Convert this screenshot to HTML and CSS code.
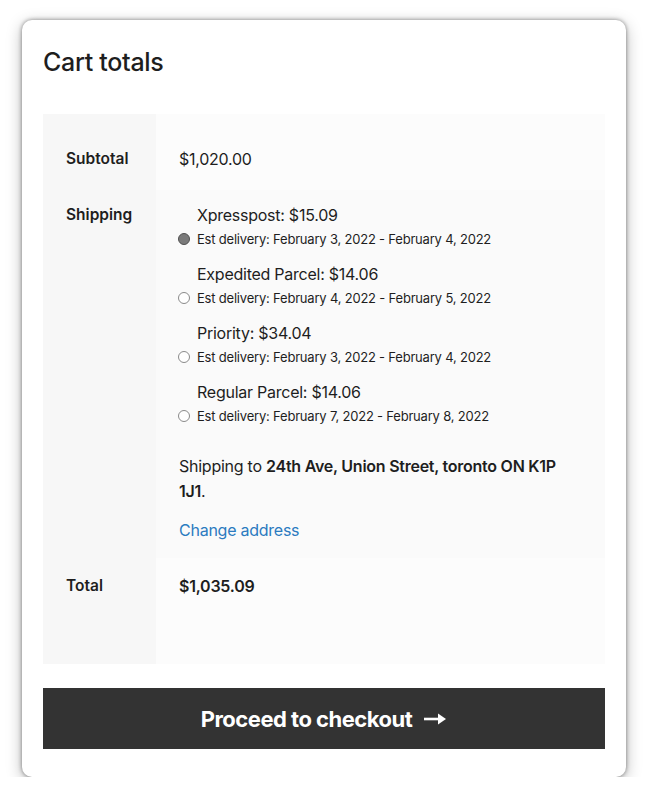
FILE: index.html
```html
<!DOCTYPE html>
<html lang="en">
<head>
    <meta charset="UTF-8">
    <meta name="viewport" content="width=device-width, initial-scale=1.0">
    <title>Cart totals</title>
    <link rel="stylesheet" href="styles.css">
</head>
<body>
    <div class="cart-totals">
        <h2>Cart totals</h2>
        <table class="totals-table">
            <tr class="row-subtotal">
                <th>Subtotal</th>
                <td>$1,020.00</td>
            </tr>
            <tr class="row-shipping">
                <th>Shipping</th>
                <td>
                    <ul class="methods">
                        <li class="method">
                            <label class="method-name" for="m1">Xpresspost: $15.09</label>
                            <input type="radio" name="ship" id="m1" class="radio" checked>
                            <span class="est">Est delivery: February 3, 2022 - February 4, 2022</span>
                        </li>
                        <li class="method">
                            <label class="method-name" for="m2">Expedited Parcel: $14.06</label>
                            <input type="radio" name="ship" id="m2" class="radio">
                            <span class="est">Est delivery: February 4, 2022 - February 5, 2022</span>
                        </li>
                        <li class="method">
                            <label class="method-name" for="m3">Priority: $34.04</label>
                            <input type="radio" name="ship" id="m3" class="radio">
                            <span class="est">Est delivery: February 3, 2022 - February 4, 2022</span>
                        </li>
                        <li class="method">
                            <label class="method-name" for="m4">Regular Parcel: $14.06</label>
                            <input type="radio" name="ship" id="m4" class="radio">
                            <span class="est">Est delivery: February 7, 2022 - February 8, 2022</span>
                        </li>
                    </ul>
                    <p class="destination">Shipping to <strong>24th Ave, Union Street, toronto ON K1P 1J1</strong>.</p>
                    <a href="#" class="change-address">Change address</a>
                </td>
            </tr>
            <tr class="row-total">
                <th>Total</th>
                <td><strong>$1,035.09</strong></td>
            </tr>
        </table>
        <a href="#" class="checkout-button">Proceed to checkout
            <svg class="arrow" width="24" height="14" viewBox="0 0 24 14"><path d="M1 7h17" stroke="#fff" stroke-width="2.6"/><path d="M15 1.5l8 5.5-8 5.5z" fill="#fff"/></svg>
        </a>
    </div>
</body>
</html>
```

FILE: styles.css
```css
body {
    margin: 0;
    background-color: #fff;
    font-family: Inter, "Noto Sans", sans-serif;
    color: #1e1e1e;
}
.cart-totals {
    margin: 20px 0 0 22px;
    width: 562px;
    padding: 27px 21px 28px;
    background-color: #fff;
    border-radius: 10px;
    box-shadow: 0 0 4px rgba(0, 0, 0, 0.45), 0 4px 16px rgba(0, 0, 0, 0.28);
}
h2 {
    margin: 0 0 37px;
    font-size: 25px;
    line-height: 30px;
    font-weight: 500;
    letter-spacing: -0.3px;
}
.totals-table {
    width: 100%;
    border-collapse: collapse;
    font-size: 16px;
    line-height: 24px;
    letter-spacing: -0.25px;
}
.totals-table th {
    width: 89px;
    padding-left: 23px;
    text-align: left;
    vertical-align: top;
    font-size: 15.5px;
    font-weight: 600;
    letter-spacing: 0;
    background-color: #f7f7f7;
}
.totals-table td {
    padding-left: 23px;
    padding-right: 30px;
    vertical-align: top;
    background-color: #fcfcfc;
}
.row-subtotal th,
.row-subtotal td {
    height: 42px;
    padding-top: 33px;
}
.row-shipping th,
.row-shipping td {
    padding-top: 13px;
    padding-bottom: 15px;
}
.row-shipping td {
    background-color: #fafafa;
}
.row-total th,
.row-total td {
    height: 89px;
    padding-top: 16px;
}
.row-total strong {
    font-weight: 600;
}
.methods {
    margin: 0;
    padding: 0;
    list-style: none;
}
.method {
    display: grid;
    grid-template-columns: 12px 1fr;
    column-gap: 6px;
    margin-bottom: 11px;
}
.method-name {
    grid-column: 2;
    line-height: 24px;
}
.radio {
    appearance: none;
    grid-column: 1;
    grid-row: 2;
    align-self: center;
    width: 12px;
    height: 12px;
    margin: 0 0 1px -1px;
    border: 1px solid #8a8a8a;
    border-radius: 50%;
    background-color: #fff;
}
.radio:checked {
    background-color: #7a7a7a;
    border-color: #505050;
}
.est {
    grid-column: 2;
    grid-row: 2;
    font-size: 13px;
    line-height: 24px;
    letter-spacing: -0.2px;
}
.destination {
    margin: 26px 0 14px;
    line-height: 25px;
}
.destination strong {
    font-weight: 600;
}
.change-address {
    display: block;
    color: #2b7bc0;
    text-decoration: none;
    line-height: 25px;
}
.checkout-button {
    display: flex;
    justify-content: center;
    align-items: center;
    gap: 11px;
    margin-top: 24px;
    height: 61px;
    background-color: #333;
    color: #fff;
    font-size: 22px;
    font-weight: 700;
    text-decoration: none;
    letter-spacing: -0.5px;
}
```
